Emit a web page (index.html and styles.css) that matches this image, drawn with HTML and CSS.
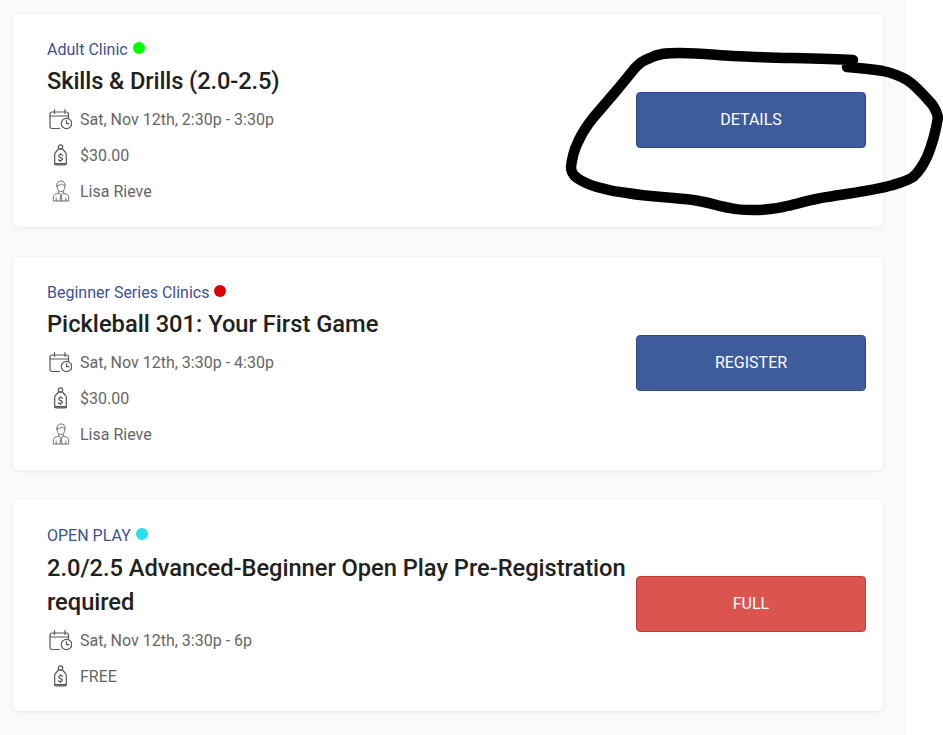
FILE: index.html
```html
<!DOCTYPE html>
<html lang="en">
<head>
<meta charset="utf-8">
<title>Clinics</title>
<link rel="stylesheet" href="styles.css">
</head>
<body>
<svg width="0" height="0" class="defs" aria-hidden="true">
  <symbol id="i-cal" viewBox="0 0 24 24">
    <path d="M11.500 21.500H4A2 2 0 0 1 2 19.500V7A2 2 0 0 1 4 5H18.500A2 2 0 0 1 20.500 7V11.500"/>
    <path d="M2 9H20.500M6.500 2.500V6.500M17 2.500V6.500"/>
    <circle cx="18.500" cy="16.500" r="5.200"/>
    <path d="M18.500 13.700V16.700H21"/>
  </symbol>
  <symbol id="i-tag" viewBox="0 0 24 24">
    <circle cx="12.500" cy="4" r="2.200"/>
    <path d="M10.500 6L7.500 9.500A2 2 0 0 0 6.700 11.200V20.500A1.500 1.500 0 0 0 8.200 22H16.800A1.500 1.500 0 0 0 18.300 20.500V11.200A2 2 0 0 0 17.500 9.500L14.500 6Z"/>
    <path d="M14.500 12.300C14 11.400 10.700 11.300 10.700 13.100C10.700 15 14.500 14.200 14.500 16.100C14.500 17.800 11.100 17.700 10.500 16.800M12.600 10.600V11.600M12.600 17.400V18.400"/>
    <path class="base" d="M7 20.800H18"/>
  </symbol>
  <symbol id="i-user" viewBox="0 0 24 24">
    <path d="M9 7C8.600 3.500 10.700 2 13 2C15.300 2 17.400 3.500 17 7C16.900 10.500 15 12.700 13 12.700C11 12.700 9.100 10.500 9 7Z"/>
    <path d="M9 6.500C11 6.500 13 6 14.200 4.800C14.800 5.800 15.800 6.500 17 6.500"/>
    <path d="M10.800 12V14L6.800 15.500C5.800 16 5.300 17 5.300 18V22H20.700V18C20.700 17 20.200 16 19.200 15.500L15.200 14V12"/>
    <path d="M10.800 14L13 16.500L15.200 14M13 16.500L11.800 22M13 16.500L14.200 22M8.200 19V22M17.800 19V22"/>
  </symbol>
</svg>

<main class="list">
  <article class="card">
    <div class="info">
      <div class="category">Adult Clinic <span class="dot dot-green"></span></div>
      <h2 class="title title-tight">Skills &amp; Drills (2.0-2.5)</h2>
      <ul class="meta">
        <li><svg class="icon"><use href="#i-cal"/></svg>Sat, Nov 12th, 2:30p - 3:30p</li>
        <li><svg class="icon"><use href="#i-tag"/></svg>$30.00</li>
        <li><svg class="icon icon-light"><use href="#i-user"/></svg>Lisa Rieve</li>
      </ul>
    </div>
    <a class="btn btn-blue">DETAILS</a>
  </article>

  <article class="card">
    <div class="info">
      <div class="category">Beginner Series Clinics <span class="dot dot-red"></span></div>
      <h2 class="title">Pickleball 301: Your First Game</h2>
      <ul class="meta">
        <li><svg class="icon"><use href="#i-cal"/></svg>Sat, Nov 12th, 3:30p - 4:30p</li>
        <li><svg class="icon"><use href="#i-tag"/></svg>$30.00</li>
        <li><svg class="icon icon-light"><use href="#i-user"/></svg>Lisa Rieve</li>
      </ul>
    </div>
    <a class="btn btn-blue">REGISTER</a>
  </article>

  <article class="card card-long">
    <div class="info">
      <div class="category">OPEN PLAY <span class="dot dot-cyan"></span></div>
      <h2 class="title title-long">2.0/2.5 Advanced-Beginner Open Play Pre&#8209;Registration required</h2>
      <ul class="meta">
        <li><svg class="icon"><use href="#i-cal"/></svg>Sat, Nov 12th, 3:30p - 6p</li>
        <li><svg class="icon"><use href="#i-tag"/></svg>FREE</li>
      </ul>
    </div>
    <a class="btn btn-red">FULL</a>
  </article>
</main>

<svg class="scribble" width="943" height="240" viewBox="0 0 943 240" aria-hidden="true">
  <path d="M853 60C815 58 770 58 733 56C715 55 700 53 680 53C665 53 657 54 650 58C642 61 640 63 635 68L617 90L593 118C585 128 582 133 578 142C574 150 572 158 571 167C571 172 573 175 577 178C583 182 590 185 597 187C607 190 617 192 627 193C650 197 670 197 693 200C708 202 718 206 730 208C738 210 745 210 753 210C765 210 776 209 787 206C800 203 813 199 827 197C850 193 872 191 893 185C901 182 907 181 913 177C920 171 923 165 927 157C932 145 936 130 938 117C936 110 934 106 930 102C923 94 916 86 907 80C900 76 892 73 883 71C871 69 859 68 847 67"/>
</svg>
</body>
</html>
```

FILE: styles.css
```css
* { box-sizing: border-box; }
html, body { margin: 0; padding: 0; height: 100%; overflow: hidden; background: #fff; }
body { font-family: Roboto, "Liberation Sans", sans-serif; position: relative; }
.defs { position: absolute; }
.list {
  width: 906px;
  min-height: 735px;
  background: #f9fbfb;
  padding: 14px 23px 24px 13px;
  display: flex;
  flex-direction: column;
  gap: 30px;
}
.card {
  background: #fff;
  border-radius: 5px;
  box-shadow: 0 1px 4px rgba(0, 0, 0, .08);
  padding: 25px 17px 18px 34px;
  display: flex;
  align-items: center;
  gap: 6px;
}
.card-long { padding-bottom: 17px; }
.info { flex: 1; min-width: 0; }
.category { font-size: 16px; line-height: 22px; color: #3d5094; display: flex; align-items: flex-start; gap: 5px; }
.dot { width: 12px; height: 12px; border-radius: 50%; margin-top: 3px; }
.dot-green { background: #00ff00; }
.dot-red { background: #dd0000; }
.dot-cyan { background: #28dff0; }
.title { margin: 3px 0 0; font-size: 23.7px; line-height: 34px; font-weight: 500; color: #212121; }
.title-tight { letter-spacing: -.12px; }
.title-long { margin-top: 4px; letter-spacing: -.04px; }
.meta { list-style: none; margin: 3px 0 0; padding: 0; }
.meta li { height: 36px; display: flex; align-items: center; font-size: 16px; color: #666; }
.icon {
  width: 24px; height: 24px; margin: 0 8px 0 1px; flex: none;
  fill: none; stroke: #55585e; stroke-width: 1.200; stroke-linecap: round; stroke-linejoin: round;
}
.icon-light { stroke: #6a7280; stroke-width: 1; }
.base { stroke-width: 1.800; }
.btn {
  width: 230px; height: 56px; flex: none; margin-bottom: 8px; padding-bottom: 2px;
  display: flex; align-items: center; justify-content: center;
  color: #fff; font-size: 16px; border-radius: 4px; border: 1px solid;
}
.btn-blue { background: #3e5c9c; border-color: #2f4a8a; }
.btn-red { background: #dc5450; border-color: #c03c38; margin-bottom: 11px; }
.scribble {
  position: absolute; left: 0; top: 0; pointer-events: none;
}
.scribble path { fill: none; stroke: #000; stroke-width: 10.500; stroke-linecap: round; stroke-linejoin: round; }
```
